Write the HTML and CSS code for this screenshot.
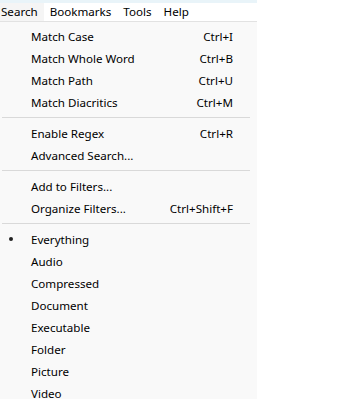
FILE: index.html
```html
<!DOCTYPE html>
<html>
<head>
<meta charset="utf-8">
<link rel="stylesheet" href="styles.css">
</head>
<body>
<div class="window">
  <div class="topband"></div>
  <div class="menubar">
    <span class="mb-item active">Search</span>
    <span class="mb-item">Bookmarks</span>
    <span class="mb-item">Tools</span>
    <span class="mb-item">Help</span>
  </div>
  <div class="rule"></div>
  <div class="menu">
    <div class="row"><span class="mark"></span><span class="label">Match Case</span><span class="key">Ctrl+I</span></div>
    <div class="row"><span class="mark"></span><span class="label">Match Whole Word</span><span class="key">Ctrl+B</span></div>
    <div class="row"><span class="mark"></span><span class="label">Match Path</span><span class="key">Ctrl+U</span></div>
    <div class="row"><span class="mark"></span><span class="label">Match Diacritics</span><span class="key">Ctrl+M</span></div>
    <div class="sep"></div>
    <div class="row"><span class="mark"></span><span class="label">Enable Regex</span><span class="key">Ctrl+R</span></div>
    <div class="row"><span class="mark"></span><span class="label">Advanced Search...</span><span class="key"></span></div>
    <div class="sep"></div>
    <div class="row"><span class="mark"></span><span class="label">Add to Filters...</span><span class="key"></span></div>
    <div class="row"><span class="mark"></span><span class="label">Organize Filters...</span><span class="key">Ctrl+Shift+F</span></div>
    <div class="sep"></div>
    <div class="row"><span class="mark"><span class="dot"></span></span><span class="label">Everything</span><span class="key"></span></div>
    <div class="row"><span class="mark"></span><span class="label">Audio</span><span class="key"></span></div>
    <div class="row"><span class="mark"></span><span class="label">Compressed</span><span class="key"></span></div>
    <div class="row"><span class="mark"></span><span class="label">Document</span><span class="key"></span></div>
    <div class="row"><span class="mark"></span><span class="label">Executable</span><span class="key"></span></div>
    <div class="row"><span class="mark"></span><span class="label">Folder</span><span class="key"></span></div>
    <div class="row"><span class="mark"></span><span class="label">Picture</span><span class="key"></span></div>
    <div class="row"><span class="mark"></span><span class="label">Video</span><span class="key"></span></div>
  </div>
</div>
</body>
</html>
```

FILE: styles.css
```css
html, body {
  margin: 0;
  padding: 0;
  background: #ffffff;
  height: 100%;
  overflow: hidden;
}
body {
  font-family: "Noto Sans", "Open Sans", "Liberation Sans", sans-serif;
  font-size: 11.6px;
  color: #000000;
}
.window {
  width: 257px;
  min-height: 100%;
  display: flex;
  flex-direction: column;
}
.window > * {
  flex-shrink: 0;
}
.topband {
  height: 3px;
  background: #e9f4f9;
}
.menubar {
  height: 18px;
  display: flex;
  align-items: stretch;
  background: #ffffff;
  margin-left: -5px;
}
.mb-item {
  padding: 0 6px;
  line-height: 18px;
}
.mb-item.active {
  background: #f5f5f5;
}
.rule {
  height: 1px;
  background: #e2e2e2;
}
.menu {
  flex: 1 0 auto;
  background: #f9f9f9;
  padding-top: 3px;
}
.row {
  height: 22px;
  display: flex;
  align-items: center;
}
.mark {
  width: 31px;
  display: flex;
  align-items: center;
  justify-content: center;
  padding-right: 10px;
  box-sizing: border-box;
}
.dot {
  width: 4px;
  height: 4px;
  border-radius: 50%;
  background: #222;
}
.label {
  flex: 1;
}
.key {
  padding-right: 24px;
}
.sep {
  height: 1px;
  background: #d9d9d9;
  margin: 4px 7px 4px 2px;
}
```
